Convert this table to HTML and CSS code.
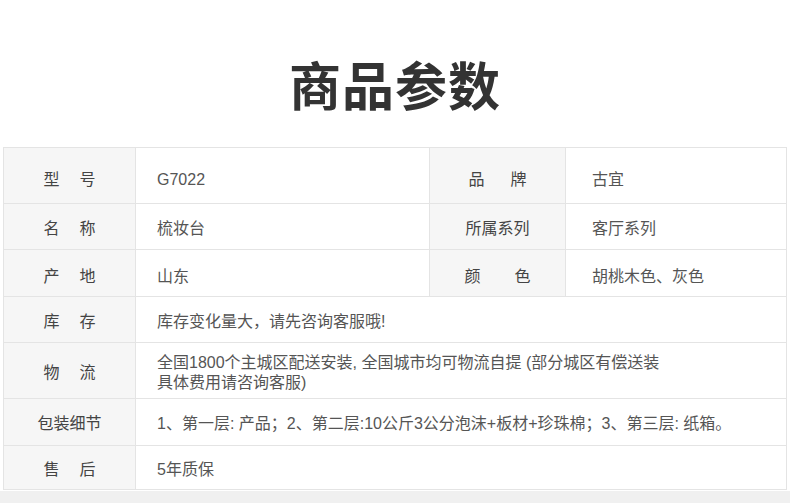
FILE: index.html
```html
<!DOCTYPE html>
<html lang="zh-CN">

<head>
    <meta charset="UTF-8">
    <meta name="viewport" content="width=device-width, initial-scale=1.0">
    <title>商品参数</title>
    <link rel="stylesheet" href="styles.css">
</head>

<body>
    <h1 class="title">商品参数</h1>

    <div class="params">
        <div class="label spaced low">型　号</div>
        <div class="value low">G7022</div>
        <div class="label spaced wide low">品　牌</div>
        <div class="value right low">古宜</div>

        <div class="label spaced">名　称</div>
        <div class="value">梳妆台</div>
        <div class="label">所属系列</div>
        <div class="value right">客厅系列</div>

        <div class="label spaced low">产　地</div>
        <div class="value low">山东</div>
        <div class="label spaced wider low">颜　色</div>
        <div class="value right low">胡桃木色、灰色</div>

        <div class="label spaced">库　存</div>
        <div class="value full">库存变化量大，请先咨询客服哦!</div>

        <div class="label spaced">物　流</div>
        <div class="value full">全国1800个主城区配送安装, 全国城市均可物流自提 (部分城区有偿送装<br>具体费用请咨询客服)</div>

        <div class="label">包装细节</div>
        <div class="value full">1、第一层: 产品；2、第二层:10公斤3公分泡沫+板材+珍珠棉；3、第三层: 纸箱。</div>

        <div class="label spaced">售　后</div>
        <div class="value full">5年质保</div>
    </div>

    <div class="bottom"></div>
</body>

</html>
```

FILE: styles.css
```css
/* General styles */
* {
    box-sizing: border-box;
}

body {
    margin: 0;
    padding: 0;
    background-color: #ffffff;
    font-family: "Liberation Sans", "Noto Sans CJK SC", sans-serif;
    color: #555;
}

.title {
    margin: 0;
    padding-top: 58px;
    font-family: "Noto Sans CJK SC", sans-serif;
    font-size: 52px;
    line-height: 52px;
    font-weight: 700;
    color: #333;
    text-align: center;
    letter-spacing: 1px;
}

/* Parameter table */
.params {
    display: grid;
    grid-template-columns: 131px 293px 135px 1fr;
    grid-template-rows: 55px 45px 46px 45px 55px 46px 43px;
    gap: 1px;
    padding: 1px;
    margin: 37px 3px 0;
    background-color: #e4e4e4;
}

.label,
.value {
    display: flex;
    align-items: center;
    padding-top: 4px;
    font-size: 16px;
    line-height: 20px;
}

.label {
    justify-content: center;
    background-color: #f6f6f6;
    color: #444;
}

.label.spaced {
    letter-spacing: 2px;
    padding-left: 2px;
}

.label.wide {
    letter-spacing: 5px;
    padding-left: 5px;
}

.label.wider {
    letter-spacing: 9px;
    padding-left: 9px;
}

.value {
    background-color: #ffffff;
    padding-left: 21px;
}

.value.right {
    padding-left: 26px;
}

.low {
    padding-top: 8px;
}

.value.full {
    grid-column: span 3;
}

.bottom {
    height: 12px;
    margin-top: 1px;
    background-color: #f0f0f0;
}
```
